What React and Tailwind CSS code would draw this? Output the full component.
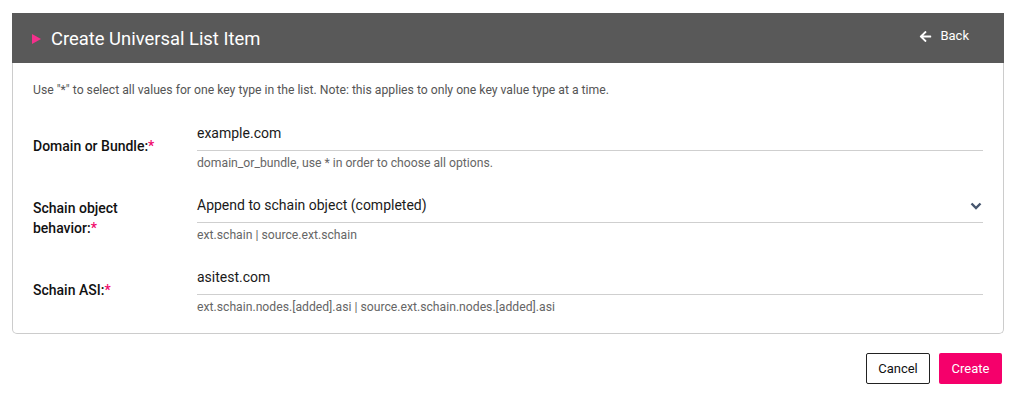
import React from 'react';
import { FaArrowLeft } from 'react-icons/fa';

const Field = ({ label, children, help }) => (
  <div className="flex items-center">
    <div className="w-[164px] shrink-0 pr-4 text-[14px] font-medium leading-[20px] text-[#111]">
      {label}
      <span className="text-[#f0066a]">*</span>
    </div>
    <div className="flex-1">
      {children}
      <div className="mt-[5px] text-[12.2px] leading-[14px] text-[#666]">{help}</div>
    </div>
  </div>
);

const TextInput = ({ value }) => (
  <div className="h-[29px] border-b border-[#cfcfcf] pt-[1px] text-[14px] leading-[20px] text-[#1a1a1a]">
    {value}
  </div>
);

const SelectInput = ({ value }) => (
  <div className="flex h-[29px] items-start justify-between border-b border-[#cfcfcf] pt-[1px] text-[14px] leading-[20px] text-[#1a1a1a]">
    <span>{value}</span>
    <svg className="mr-[1px] mt-[7px] h-[8px] w-[12px]" viewBox="0 0 12 8" fill="none">
      <path d="M1.5 1.5l4.5 4.5 4.5-4.5" stroke="#46566e" strokeWidth="2.4" />
    </svg>
  </div>
);

export default function App() {
  return (
    <div className="min-h-[396px] bg-white pt-[13px] pl-[12px] pr-[8px] font-['Roboto','Liberation_Sans',sans-serif]">
      <div className="flex h-[50px] items-center justify-between bg-[#595959] pl-[20px] pr-[35px]">
        <div className="flex items-center pt-[2px]">
          <svg className="mr-[10px] h-[10px] w-[9px]" viewBox="0 0 9 10">
            <path d="M0 0l9 5L0 10z" fill="#f4308c" />
          </svg>
          <span className="text-[18.4px] leading-[24px] text-white">Create Universal List Item</span>
        </div>
        <button className="mb-[4px] flex items-center gap-[8px] text-[13px] text-white">
          <FaArrowLeft className="h-[13px] w-[13px]" />
          Back
        </button>
      </div>
      <div className="rounded-b-[5px] border border-t-0 border-[#cccccc] pl-[20px] pr-[20px] pt-[19px] pb-[19px]">
        <p className="text-[12.2px] leading-[16px] text-[#555]">
          Use "*" to select all values for one key type in the list. Note: this applies to only one key value type at a time.
        </p>
        <div className="mt-[24px] flex flex-col gap-[24px]">
          <Field label="Domain or Bundle:" help="domain_or_bundle, use * in order to choose all options.">
            <TextInput value="example.com" />
          </Field>
          <Field
            label={<>Schain object<br />behavior:</>}
            help="ext.schain | source.ext.schain"
          >
            <SelectInput value="Append to schain object (completed)" />
          </Field>
          <Field label="Schain ASI:" help="ext.schain.nodes.[added].asi | source.ext.schain.nodes.[added].asi">
            <TextInput value="asitest.com" />
          </Field>
        </div>
      </div>
      <div className="mt-[19px] flex justify-end gap-[9px] pr-[2px]">
        <button className="h-[31px] w-[64px] rounded-[2px] border border-[#222] bg-white text-[13px] text-[#111]">
          Cancel
        </button>
        <button className="h-[31px] w-[63px] rounded-[2px] bg-[#f5006b] text-[13px] text-white">
          Create
        </button>
      </div>
    </div>
  );
}
